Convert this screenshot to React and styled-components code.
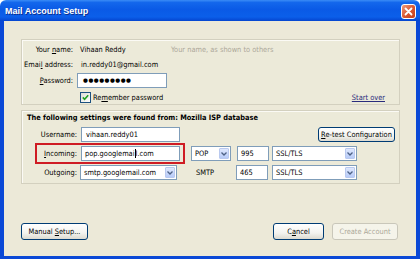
import React from 'react';
import styled, { createGlobalStyle } from 'styled-components';

const GlobalStyle = createGlobalStyle`
  html, body {
    margin: 0;
    padding: 0;
    background: #ffffff;
  }
  body {
    font-family: "DejaVu Sans Condensed", "Liberation Sans", sans-serif;
    font-size: 7.4px;
    color: #000;
  }
`;

const Window = styled.div`
  width: 420px;
  height: 259px;
  display: flex;
  flex-direction: column;
`;

const TitleBar = styled.div`
  height: 21px;
  flex: none;
  display: flex;
  align-items: center;
  justify-content: space-between;
  padding: 0 4px 0 5px;
  background: linear-gradient(
    to bottom,
    #3a8cf6 0%,
    #1367ec 12%,
    #0a5ae6 45%,
    #0b5fea 80%,
    #0545cf 100%
  );
  border-radius: 6px 6px 0 0;
`;

const Title = styled.span`
  font-family: "Liberation Sans", sans-serif;
  font-weight: bold;
  font-size: 9px;
  color: #fff;
  text-shadow: 1px 1px 0 #0a2f8f;
  padding-top: 1px;
`;

const CloseButton = styled.div`
  width: 15px;
  height: 15px;
  box-sizing: border-box;
  border: 1px solid #fff;
  border-radius: 3px;
  background: linear-gradient(to bottom right, #ef9a7b, #d9552f 55%, #c2401b);
  display: flex;
  align-items: center;
  justify-content: center;
  margin-top: 1px;
`;

const Body = styled.div`
  flex: 1;
  display: flex;
  flex-direction: column;
  gap: 5px;
  background: #ece9d8;
  border: 4px solid #0a48d6;
  border-top: none;
  border-bottom-width: 3px;
  padding: 18px 16px 16px 17px;
`;

const Panel = styled.div`
  border: 1px solid #d3d0bf;
  box-shadow: inset 1px 1px 0 #fbfaf5;
  background: #ecead9;
`;

const AccountGrid = styled(Panel)`
  display: grid;
  grid-template-columns: 51px 90px 1fr;
  grid-template-rows: 14px 13px 15px 14px;
  column-gap: 4px;
  row-gap: 2px;
  align-items: center;
  padding: 2px 14px 0 0;
`;

const ServerGrid = styled(Panel)`
  display: grid;
  grid-template-columns: 55px 110px 45px 36px 85px 1fr;
  grid-template-rows: 12px 15px 15px 15px;
  row-gap: 4px;
  align-items: center;
  padding: 0 4px 3px 4px;
`;

const Label = styled.span`
  text-align: right;
  white-space: nowrap;
  padding-right: ${(p) => p.$pr || 0}px;
  width: ${(p) => (p.$w ? `${p.$w}px` : 'auto')};
  box-sizing: border-box;
  flex: none;
`;

const Value = styled.span`
  white-space: nowrap;
  padding-left: ${(p) => p.$pl || 0}px;
  grid-column: ${(p) => p.$col || 'auto'};
`;

const Hint = styled.span`
  color: #aca899;
  white-space: nowrap;
`;

const Key = styled.span`
  text-decoration: underline;
`;

const Field = styled.div`
  width: ${(p) => p.$w}px;
  height: 15px;
  box-sizing: border-box;
  border: 1px solid #7f9db9;
  background: #fff;
  display: flex;
  align-items: center;
  padding-left: ${(p) => p.$pl ?? 3}px;
  margin-left: ${(p) => p.$ml || 0}px;
  white-space: nowrap;
  overflow: hidden;
`;

const Dots = styled.span`
  font-family: "DejaVu Sans", sans-serif;
  font-size: 5.6px;
  letter-spacing: 0.5px;
  line-height: 1;
`;

const Caret = styled.span`
  display: inline-block;
  width: 1px;
  height: 9px;
  background: #000;
  vertical-align: middle;
`;

const FieldText = styled.span`
  flex: 1;
`;

const DropArrow = styled.div`
  width: 10px;
  align-self: stretch;
  margin: 1px;
  box-sizing: border-box;
  border: 1px solid #b9c9ef;
  border-radius: 1px;
  background: linear-gradient(to bottom, #dfe8fd, #b7cbf8);
  display: flex;
  align-items: center;
  justify-content: center;
`;

const CheckRow = styled.div`
  display: flex;
  align-items: center;
  gap: 2px;
  padding-left: 3px;
  white-space: nowrap;
`;

const CheckBox = styled.div`
  width: 11px;
  height: 11px;
  box-sizing: border-box;
  border: 1px solid #1c5180;
  background: linear-gradient(to bottom right, #dcdcd6, #ffffff);
  display: flex;
  align-items: center;
  justify-content: center;
`;

const Link = styled.span`
  justify-self: end;
  color: #2a2c7c;
  text-decoration: underline;
  white-space: nowrap;
`;

const Heading = styled.div`
  grid-column: 1 / -1;
  font-weight: bold;
  white-space: nowrap;
  padding-left: 1px;
`;

const Highlight = styled.div`
  grid-column: 1 / 3;
  justify-self: start;
  display: flex;
  align-items: center;
  margin-left: 12px;
  padding-right: 2px;
  outline: 2px solid #cf1c24;
  outline-offset: 1px;
`;

const Button = styled.div`
  width: ${(p) => p.$w}px;
  height: ${(p) => p.$h || 17}px;
  box-sizing: border-box;
  border: 1px solid ${(p) => (p.$disabled ? '#c9c7ba' : '#003c74')};
  border-radius: 3px;
  background: ${(p) =>
    p.$disabled
      ? '#f5f4ea'
      : 'linear-gradient(to bottom, #ffffff 0%, #f3f3ef 60%, #dcdad0 100%)'};
  color: ${(p) => (p.$disabled ? '#aca899' : '#000')};
  display: flex;
  align-items: center;
  justify-content: center;
  white-space: nowrap;
  grid-column: ${(p) => p.$col || 'auto'};
  justify-self: end;
`;

const Footer = styled.div`
  margin-top: auto;
  display: flex;
  align-items: center;
  justify-content: space-between;
  padding-right: 2px;
`;

const ButtonGroup = styled.div`
  display: flex;
  gap: 8px;
`;

const Arrow = () => (
  <svg width="6" height="4" viewBox="0 0 6 4">
    <path d="M0.5 0.5 L3 3 L5.5 0.5" fill="none" stroke="#4d6185" strokeWidth="1.3" />
  </svg>
);

const Select = ({ w, ml, children }) => (
  <Field $w={w} $ml={ml} $pl={3}>
    <FieldText>{children}</FieldText>
    <DropArrow>
      <Arrow />
    </DropArrow>
  </Field>
);

export default function App() {
  return (
    <>
      <GlobalStyle />
      <Window>
        <TitleBar>
          <Title>Mail Account Setup</Title>
          <CloseButton>
            <svg width="9" height="9" viewBox="0 0 9 9">
              <path d="M1.5 1.5 L7.5 7.5 M7.5 1.5 L1.5 7.5" stroke="#fff" strokeWidth="1.8" strokeLinecap="round" />
            </svg>
          </CloseButton>
        </TitleBar>
        <Body>
          <AccountGrid>
            <Label>
              Your <Key>n</Key>ame:
            </Label>
            <Value $pl={3}>Vihaan Reddy</Value>
            <Hint>Your name, as shown to others</Hint>

            <Label>
              Emai<Key>l</Key> address:
            </Label>
            <Value $pl={4} $col="2 / 4">
              in.reddy01@gmail.com
            </Value>

            <Label>
              <Key>P</Key>assword:
            </Label>
            <Field $w={90} $pl={5}>
              <Dots>●●●●●●●●●</Dots>
            </Field>
            <span />

            <span />
            <CheckRow>
              <CheckBox>
                <svg width="7" height="7" viewBox="0 0 7 7">
                  <path d="M0.8 3.4 L2.6 5.3 L6.2 1.2" fill="none" stroke="#21a121" strokeWidth="1.6" />
                </svg>
              </CheckBox>
              <span>
                Re<Key>m</Key>ember password
              </span>
            </CheckRow>
            <Link>Start over</Link>
          </AccountGrid>

          <ServerGrid>
            <Heading>The following settings were found from: Mozilla ISP database</Heading>

            <Label $pr={4}>Username:</Label>
            <Field $w={99} $pl={4}>
              vihaan.reddy01
            </Field>
            <Button $w={77} $h={15} $col="5 / 7">
              <span>
                <Key>R</Key>e-test Configuration
              </span>
            </Button>

            <Highlight>
              <Label $w={43} $pr={4}>
                <Key>I</Key>ncoming:
              </Label>
              <Field $w={99}>
                pop.googlemai
                <Caret />l.com
              </Field>
            </Highlight>
            <Select w={40}>POP</Select>
            <Field $w={32} $ml={1}>
              995
            </Field>
            <Select w={85}>SSL/TLS</Select>
            <span />

            <Label $pr={4}>Outgoing:</Label>
            <Select w={97} ml={-1}>
              smtp.googlemail.com
            </Select>
            <Value $pl={5}>SMTP</Value>
            <Field $w={32}>465</Field>
            <Select w={85}>SSL/TLS</Select>
            <span />
          </ServerGrid>

          <Footer>
            <Button $w={67}>
              <span>
                Manual <Key>S</Key>etup...
              </span>
            </Button>
            <ButtonGroup>
              <Button $w={51}>
                <span>
                  C<Key>a</Key>ncel
                </span>
              </Button>
              <Button $w={66} $disabled>
                Create Account
              </Button>
            </ButtonGroup>
          </Footer>
        </Body>
      </Window>
    </>
  );
}
